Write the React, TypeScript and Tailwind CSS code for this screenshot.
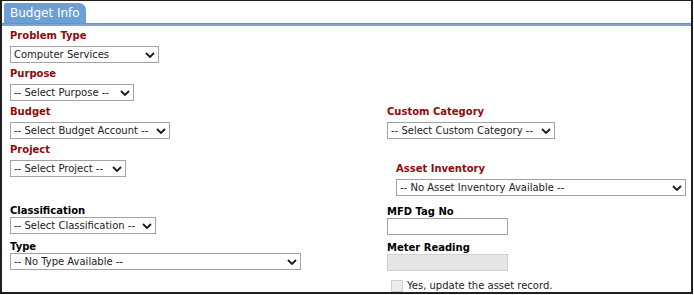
import React from "react";

const Chevron = () => (
  <svg width="10" height="6" viewBox="0 0 10 6" className="shrink-0">
    <path d="M1 1 L5 5 L9 1" fill="none" stroke="#1a1a1a" strokeWidth="1.8" strokeLinecap="butt" strokeLinejoin="miter" />
  </svg>
);

const Select = ({ text, w }: { text: string; w: string }) => (
  <div className={`${w} h-[17px] border border-[#a3a3a3] bg-white flex items-center justify-between pl-[3px] pr-[3px] text-[10px] leading-[13px] text-[#222]`}>
    <span className="whitespace-nowrap">{text}</span>
    <Chevron />
  </div>
);

const RedLabel = ({ children }: { children: React.ReactNode }) => (
  <div className="h-[13px] leading-[13px] text-[10px] font-bold text-[#8f0a0a] mb-[4px] whitespace-nowrap">{children}</div>
);

const BlackLabel = ({ children }: { children: React.ReactNode }) => (
  <div className="h-[13px] leading-[13px] text-[10px] font-bold text-black whitespace-nowrap">{children}</div>
);

export default function App() {
  return (
    <div className="w-[694px] h-[295px] bg-white" style={{ fontFamily: '"DejaVu Sans", Verdana, sans-serif' }}>
      <div className="w-[693px] h-[294px] border-l-2 border-r-2 border-b-2 border-t border-[#1f1f1f] bg-white flex flex-col">
        <div className="pl-[2px] pt-[2px] flex">
          <div className="h-[20px] w-[82px] bg-[#6d9fd6] rounded-tr-[7px] rounded-tl-[2px] text-white text-[12px] leading-[20px] pl-[6px] whitespace-nowrap">
            Budget Info
          </div>
        </div>
        <div className="h-[3px] bg-[#78a6da] border-t border-[#5f93cc]" />
        <div className="flex pl-[8px]">
          <div className="w-[377px] flex flex-col pt-[3px]">
            <RedLabel>Problem Type</RedLabel>
            <Select text="Computer Services" w="w-[149px]" />
            <div className="h-[4px]" />
            <RedLabel>Purpose</RedLabel>
            <Select text="-- Select Purpose --" w="w-[124px]" />
            <div className="h-[4px]" />
            <RedLabel>Budget</RedLabel>
            <Select text="-- Select Budget Account --" w="w-[160px]" />
            <div className="h-[4px]" />
            <RedLabel>Project</RedLabel>
            <Select text="-- Select Project --" w="w-[116px]" />
            <div className="h-[27px]" />
            <BlackLabel>Classification</BlackLabel>
            <Select text="-- Select Classification --" w="w-[146px]" />
            <div className="h-[6px]" />
            <BlackLabel>Type</BlackLabel>
            <Select text="-- No Type Available --" w="w-[291px]" />
          </div>
          <div className="flex flex-col pt-[79px]">
            <RedLabel>Custom Category</RedLabel>
            <Select text="-- Select Custom Category --" w="w-[168px]" />
            <div className="h-[23px]" />
            <div className="pl-[9px] flex flex-col">
              <RedLabel>Asset Inventory</RedLabel>
              <Select text="-- No Asset Inventory Available --" w="w-[290px]" />
            </div>
            <div className="h-[9px]" />
            <BlackLabel>MFD Tag No</BlackLabel>
            <div className="w-[121px] h-[17px] border border-[#a3a3a3] bg-white" />
            <div className="h-[6px]" />
            <BlackLabel>Meter Reading</BlackLabel>
            <div className="w-[121px] h-[17px] border border-[#cfcfcf] bg-[#e6e6e6]" />
            <div className="flex items-center mt-[8px] pl-[4px]">
              <div className="w-[12px] h-[12px] border border-[#cfcfcf] bg-[#ececec]" />
              <span className="ml-[4px] text-[10px] leading-[13px] text-[#222] whitespace-nowrap">Yes, update the asset record.</span>
            </div>
          </div>
        </div>
      </div>
    </div>
  );
}
